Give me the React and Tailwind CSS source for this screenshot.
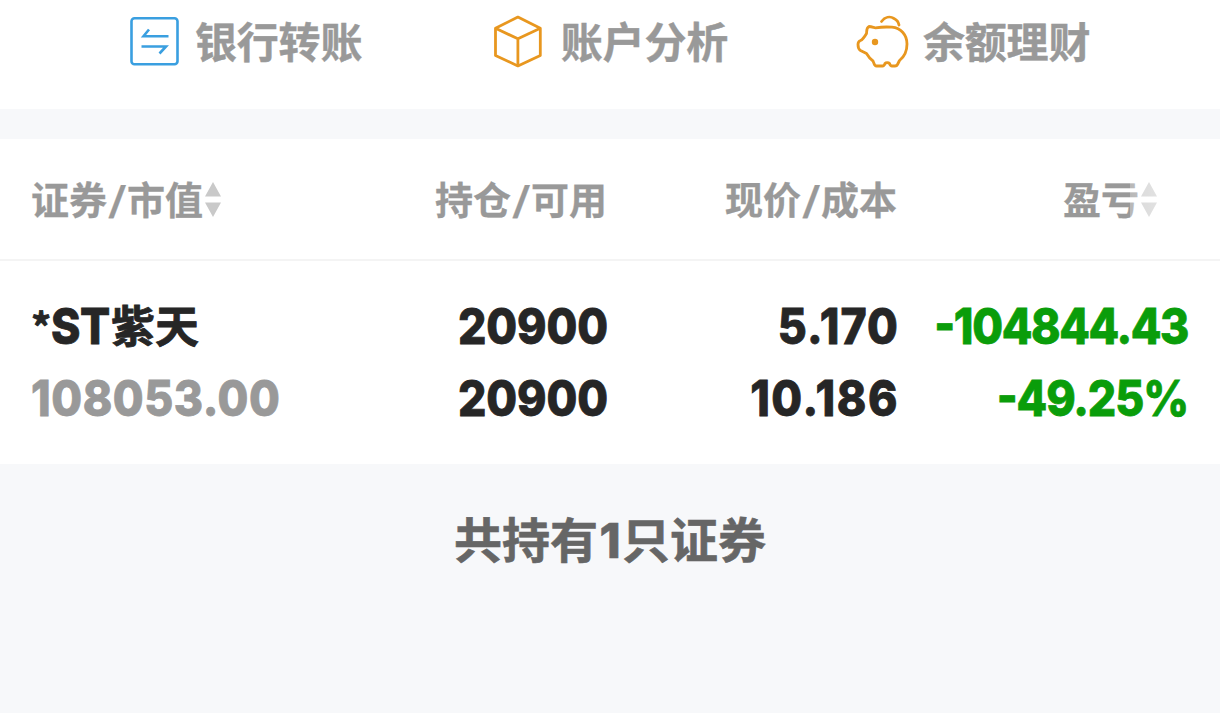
import React from 'react';

const cjk = "font-['Inter','Noto_Sans_CJK_SC',sans-serif]";
const digits = 'scale-x-[0.91] font-extrabold [-webkit-text-stroke:0.8px_currentColor]';

function TransferIcon() {
    return (
        <svg width="50" height="50" viewBox="0 0 50 50" fill="none" stroke="#3a9fe0" strokeWidth="2.6">
            <rect x="2.5" y="2.3" width="46" height="46" rx="3" />
            <path d="M20 13.5 14.5 20.3H39.5M12.5 30.5H37L30.5 37.5" />
        </svg>
    );
}

function CubeIcon() {
    return (
        <svg width="50" height="54" viewBox="0 0 50 54" fill="none" stroke="#e8971f" strokeWidth="2.8" strokeLinejoin="round">
            <path d="M25 3 47.5 14.2V41.5L25 52 2.5 41.5V14.2Z" />
            <path d="M2.5 14.2 25 24.8 47.5 14.2M25 24.8V52" />
        </svg>
    );
}

function PiggyIcon() {
    return (
        <svg width="54" height="54" viewBox="0 0 54 54" fill="none" stroke="#e8971f" strokeWidth="2.8" strokeLinecap="round" strokeLinejoin="round">
            <path d="M13 12.5C16 12.5 18.5 14 19.5 13.8C25 13 31 12.8 36 13.2C45 14 51 21 51 30C51 38 48 43 43.5 46.5L41.5 50.5C41 51.5 40 52 39 52H36C34.5 52 34 51 33.5 49.5C32.5 48.3 30 48.3 29 49.5C28.5 51 28 52 26.5 52H20.5C19 52 18.5 51 18 49.5L17 47C14 45 12 42 10.5 39.5L4.5 36.5C2.5 35.3 2 33 2 30.5C2 28 3 27 4.5 26.5C7 25.5 8.5 23 10.5 19.5C11 17 10 14 13 12.5Z" />
            <path d="M25.5 7.5C29 3 34 2 38 4.5C41 6 42.5 8 43 11" />
            <circle cx="19" cy="28" r="3.2" fill="#e8971f" stroke="none" />
        </svg>
    );
}

function SortIcon() {
    return (
        <svg className="mt-[2px]" width="16" height="36" viewBox="0 0 16 36" fill="#c9c9c9">
            <path d="M8 0 16 14.5H0ZM0 20.5H16L8 35Z" />
        </svg>
    );
}

function Shortcut({ icon, label, className }) {
    return (
        <div className={`flex items-center ${className}`}>
            {icon}
            <span className="pt-[4px] tracking-[-0.2px] [-webkit-text-stroke:0.4px_currentColor]">{label}</span>
        </div>
    );
}

function Pair({ left, right }) {
    return (
        <span className="pt-[2px] [-webkit-text-stroke:0.3px_currentColor]">
            {left}
            <span className="mx-[2.6px] inline-block -skew-x-6">/</span>
            {right}
        </span>
    );
}

function Minus() {
    return <span className="inline-block -translate-y-[3px]">-</span>;
}

export default function App() {
    return (
        <div className={`w-[1220px] h-[713px] overflow-hidden bg-[#f7f8fa] whitespace-nowrap font-bold ${cjk}`}>
            {/* Shortcuts */}
            <div className="flex h-[109px] bg-white pb-[28px] text-[42px] leading-none text-[#999]">
                <Shortcut icon={<TransferIcon />} label="银行转账" className="w-[364px] pl-[129px] gap-[16px]" />
                <Shortcut icon={<CubeIcon />} label="账户分析" className="w-[364px] pl-[129px] gap-[18px]" />
                <Shortcut icon={<PiggyIcon />} label="余额理财" className="pl-[128px] gap-[13px]" />
            </div>

            {/* Table header */}
            <div className="relative mt-[30px] flex h-[122px] items-center border-b-2 border-[#f4f4f4] bg-white text-[38px] leading-none text-[#999]">
                <div className="flex w-[240px] items-center gap-[2px] pl-[31px]">
                    <Pair left="证券" right="市值" />
                    <SortIcon />
                </div>
                <div className="flex w-[367px] justify-end">
                    <Pair left="持仓" right="可用" />
                </div>
                <div className="flex w-[290px] justify-end">
                    <Pair left="现价" right="成本" />
                </div>
                <div className="flex w-[260px] items-center justify-end gap-[2px]">
                    <span className="pt-[2px] [-webkit-text-stroke:0.3px_currentColor]">盈亏</span>
                    <SortIcon />
                </div>
                {/* fade at the scroll edge */}
                <div className="absolute right-0 top-0 h-[118px] w-[90px] bg-gradient-to-r from-white/30 to-white/80" />
            </div>

            {/* Holding */}
            <div className="flex h-[203px] bg-white pt-[30px] text-[49px] leading-[72px] text-[#262626]">
                <div className="w-[300px] pl-[31px]">
                    <div className="flex h-[72px] text-[44px] [-webkit-text-stroke:0.8px_currentColor]">
                        <span className="w-[20px] font-['Noto_Sans_CJK_SC',sans-serif] text-[40px] leading-[70px]">*</span>
                        <span className={`w-[60px] origin-left text-[49px] tracking-[-0.5px] ${digits}`}>ST</span>
                        <span>紫天</span>
                    </div>
                    <div className={`origin-left tracking-[0.6px] text-[#999] ${digits}`}>108053.00</div>
                </div>
                <div className={`w-[308px] origin-right text-right tracking-[-0.1px] ${digits}`}>
                    <div>20900</div>
                    <div>20900</div>
                </div>
                <div className={`w-[291px] origin-right text-right ${digits}`}>
                    <div className="tracking-[1.2px]">5.170</div>
                    <div className="tracking-[1.7px]">10.186</div>
                </div>
                <div className={`w-[289px] origin-right text-right text-[#0a9d0a] ${digits}`}>
                    <div className="tracking-[-1.5px]"><Minus />104844.43</div>
                    <div className="tracking-[-1.2px]"><Minus />49.25%</div>
                </div>
            </div>

            {/* Summary */}
            <div className="pt-[41px] text-center text-[48px] leading-[72px] text-[#666] [-webkit-text-stroke:0.6px_currentColor]">
                共持有<span className="mx-[1.5px] font-extrabold">1</span>只证券
            </div>
        </div>
    );
}
